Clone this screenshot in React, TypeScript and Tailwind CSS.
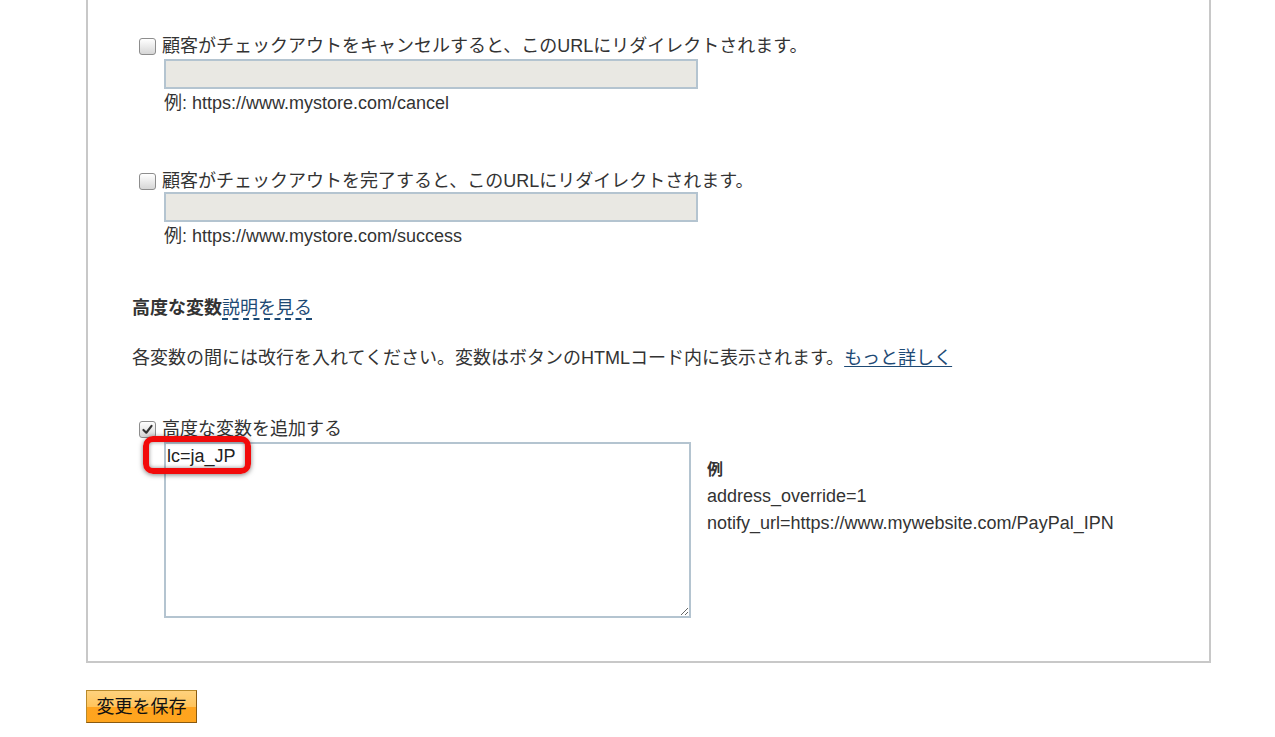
import React from 'react';

const FONT = { fontFamily: '"Liberation Sans", "Noto Sans CJK JP", sans-serif' };

const Box: React.FC<{ checked?: boolean }> = ({ checked }) => (
  <span className="relative inline-flex w-[17px] h-[17px] shrink-0 rounded-[3px] border border-[#8d8d8d] bg-gradient-to-b from-white to-[#d6d6d6] items-center justify-center">
    {checked && (
      <svg viewBox="0 0 16 16" className="w-[13px] h-[13px]">
        <path d="M3 8.5 L6.5 12 L13 3.5" fill="none" stroke="#333" strokeWidth="2.6" strokeLinecap="round" strokeLinejoin="round" />
      </svg>
    )}
  </span>
);

const UrlField: React.FC<{ label: string; example: string; gap: string }> = ({ label, example, gap }) => (
  <div className="pl-[51px]">
    <label className="flex items-center gap-[6px] h-6">
      <Box />
      <span>{label}</span>
    </label>
    <div className={`ml-[25px] ${gap} mb-[2px] w-[534px] h-[30px] bg-[#e9e8e3] border-2 border-[#b4c4d0]`} />
    <div className="ml-[25px] leading-6">{example}</div>
  </div>
);

export default function App() {
  return (
    <div className="min-h-[737px] bg-white text-[#333] text-[18px]" style={FONT}>
      <div className="pl-[86px]">
        <div className="w-[1125px] border-x-2 border-b-2 border-[#c8c8c8] pt-[34px] pb-[43px]">
          <UrlField
            label="顧客がチェックアウトをキャンセルすると、このURLにリダイレクトされます。"
            example="例: https://www.mystore.com/cancel"
            gap="mt-[1px]"
          />
          <div className="h-[54px]" />
          <UrlField
            label="顧客がチェックアウトを完了すると、このURLにリダイレクトされます。"
            example="例: https://www.mystore.com/success"
            gap="mt-[-1px]"
          />

          <div className="pl-[44px] mt-[48px] leading-6">
            <span className="font-bold">高度な変数</span>
            <a className="text-[#1e4a75] border-b-2 border-dashed border-[#1e4a75] cursor-pointer">説明を見る</a>
          </div>

          <p className="pl-[44px] mt-[26px] leading-6">
            各変数の間には改行を入れてください。変数はボタンのHTMLコード内に表示されます。
            <a className="text-[#1e4a75] underline underline-offset-2 cursor-pointer">もっと詳しく</a>
          </p>

          <div className="pl-[51px] mt-[47px]">
            <label className="flex items-center gap-[6px] h-6">
              <Box checked />
              <span>高度な変数を追加する</span>
            </label>
            <div className="flex mt-[1px] ml-[25px]">
              <div className="relative">
                <textarea
                  defaultValue="lc=ja_JP"
                  className="block w-[527px] h-[176px] border-2 border-[#b4c4d0] bg-white px-[1px] py-0 leading-6 text-[#222] text-[18px] outline-none resize"
                  style={FONT}
                />
                <div className="absolute left-[-21px] top-[-6px] w-[108px] h-[38px] rounded-[10px] border-[6px] border-[#f20a0a] shadow-[0_1px_5px_rgba(0,0,0,0.5),inset_0_0_4px_rgba(0,0,0,0.45)] pointer-events-none" />
              </div>
              <div className="ml-[16px] mt-[14px] leading-[27px]">
                <div className="font-bold text-[16px]">例</div>
                <div>address_override=1</div>
                <div>notify_url=https://www.mywebsite.com/PayPal_IPN</div>
              </div>
            </div>
          </div>
        </div>

        <button
          className="mt-[27px] w-[111px] h-[33px] border border-[#b98a2a] border-r-[#8a5a10] border-b-[#8a5a10] bg-[linear-gradient(to_bottom,#ffd27d_0%,#ffc45c_50%,#ffa41f_52%,#ffa51e_100%)] text-[#111] text-[18px] leading-none"
          style={FONT}
        >
          変更を保存
        </button>
      </div>
    </div>
  );
}
